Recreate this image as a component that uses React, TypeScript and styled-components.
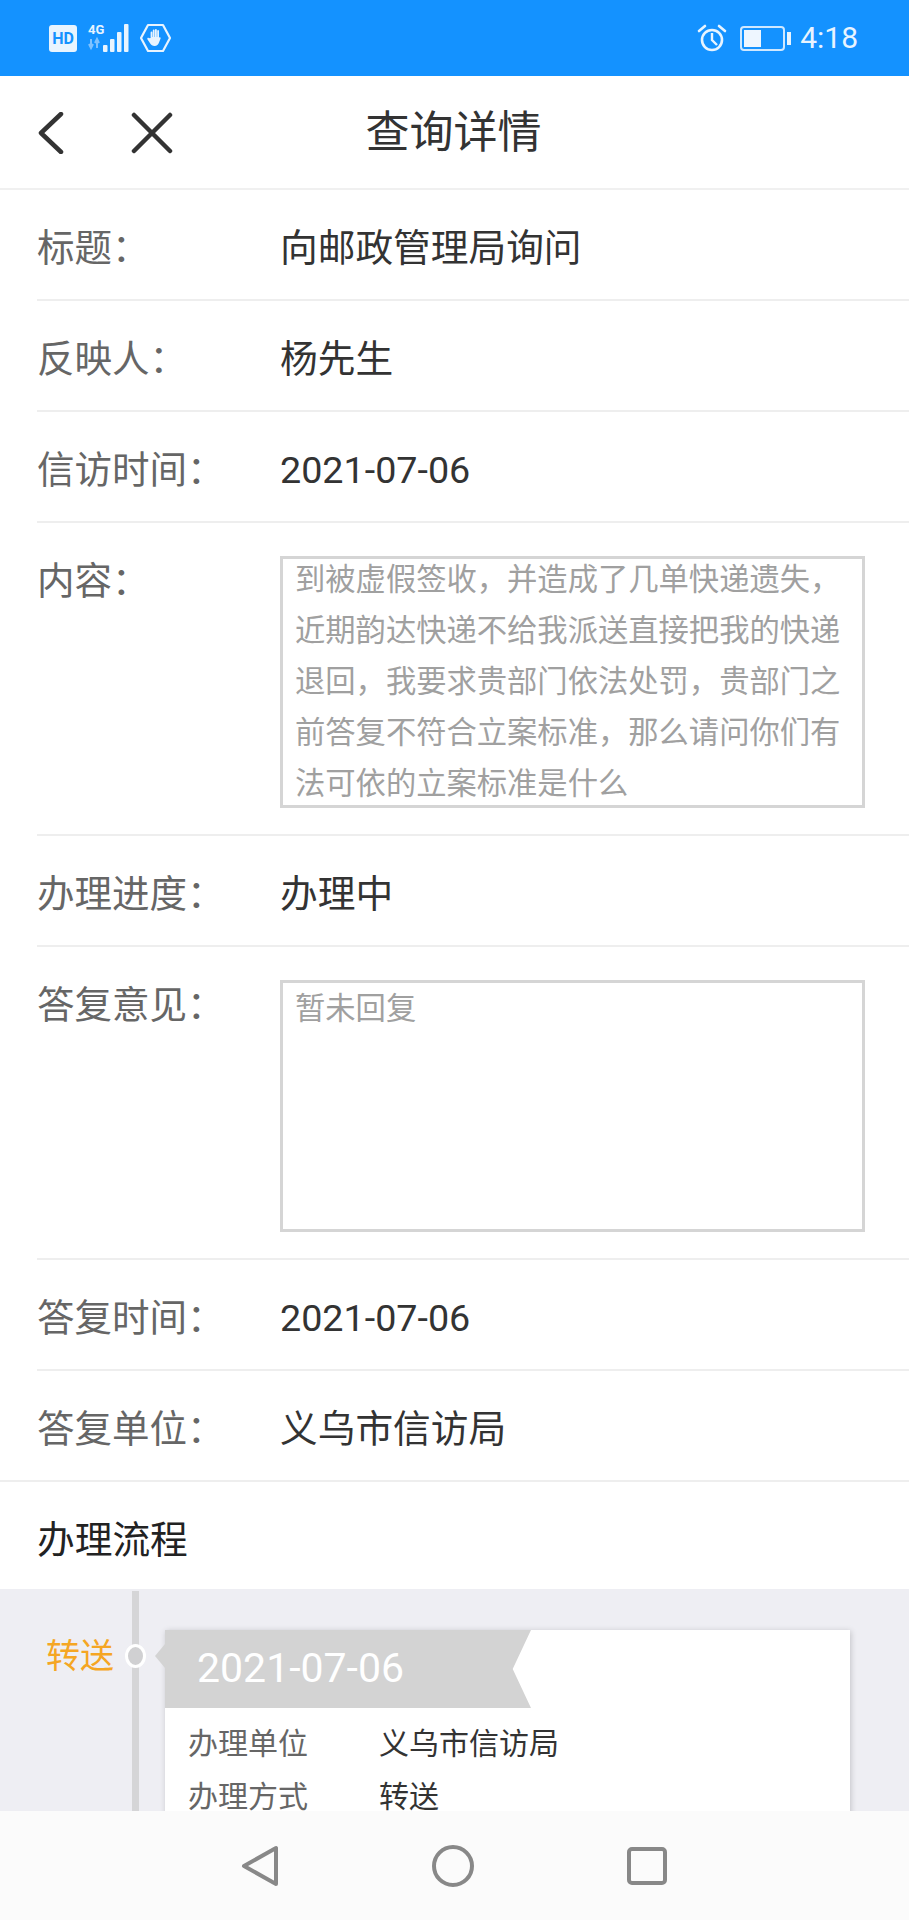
import React from "react";
import styled, { createGlobalStyle } from "styled-components";

const GlobalStyle = createGlobalStyle`
  html, body {
    margin: 0;
    padding: 0;
    background: #fff;
  }
  body {
    font-family: "Roboto", "Noto Sans CJK SC", sans-serif;
  }
`;

const App = () => {
  return (
    <Page>
      <GlobalStyle />
      <StatusBar>
        <StatusGroup>
          <HdBadge>HD</HdBadge>
          <Network>
            <NetworkType>4G</NetworkType>
            <svg width="44" height="30" viewBox="0 0 44 30">
              <path d="M4 16v9M2 21l2 4 2-4M10 25v-9M8 20l2-4 2 4" stroke="#7fc2ff" strokeWidth="2" fill="none" />
              <rect x="16" y="22" width="4.5" height="7" rx="1" fill="#e8f4ff" />
              <rect x="23" y="16" width="4.5" height="13" rx="1" fill="#e8f4ff" />
              <rect x="30" y="9" width="4.5" height="20" rx="1" fill="#e8f4ff" />
              <rect x="37" y="1" width="4.5" height="28" rx="1" fill="#e8f4ff" />
            </svg>
          </Network>
          <svg width="31" height="30" viewBox="0 0 31 30">
            <path d="M8 2h15l7 13-7 13H8L1 15z" fill="none" stroke="#e8f4ff" strokeWidth="2.2" strokeLinejoin="round" />
            <path
              d="M10.6 15V9.5a.9.9 0 0 1 1.8 0V14h.4V7.5a.9.9 0 0 1 1.8 0V14h.4V6.8a.9.9 0 0 1 1.8 0V14h.4V8a.9.9 0 0 1 1.8 0V15v-.2c.6-1 2-.2 1.6.8l-1.6 4c-.8 2-2 3.4-4.4 3.4-2.2 0-3.4-.8-4.4-2.4l-2.8-4.4c-.6-1 .8-1.8 1.6-1z"
              fill="#e8f4ff"
            />
          </svg>
        </StatusGroup>
        <StatusGroup>
          <svg width="30" height="30" viewBox="0 0 30 30">
            <circle cx="15" cy="17" r="10" fill="none" stroke="#e8f4ff" strokeWidth="2.6" />
            <path d="M15 10v7l5 5" fill="none" stroke="#e8f4ff" strokeWidth="2.4" />
            <path d="M2 8l6-5M28 8l-6-5" fill="none" stroke="#e8f4ff" strokeWidth="2.6" strokeLinecap="round" />
          </svg>
          <Battery>
            <BatteryLevel />
          </Battery>
          <Clock>4:18</Clock>
        </StatusGroup>
      </StatusBar>

      <NavBar>
        <NavIcons>
          <svg width="28" height="42" viewBox="0 0 28 42">
            <path d="M24 2L4 21l20 19" fill="none" stroke="#333" strokeWidth="4.5" strokeLinecap="round" strokeLinejoin="round" />
          </svg>
          <svg width="42" height="42" viewBox="0 0 42 42">
            <path d="M3 3l36 36M39 3L3 39" fill="none" stroke="#333" strokeWidth="4.5" strokeLinecap="round" />
          </svg>
        </NavIcons>
        <NavTitle>查询详情</NavTitle>
      </NavBar>

      <Row>
        <Label>标题：</Label>
        <Value>向邮政管理局询问</Value>
      </Row>
      <Row>
        <Label>反映人：</Label>
        <Value>杨先生</Value>
      </Row>
      <Row>
        <Label>信访时间：</Label>
        <Value>2021-07-06</Value>
      </Row>
      <Row $top>
        <Label>内容：</Label>
        <TextBox>
          <TextBoxBody $scrolled>
            到被虚假签收，并造成了几单快递遗失，近期韵达快递不给我派送直接把我的快递退回，我要求贵部门依法处罚，贵部门之前答复不符合立案标准，那么请问你们有法可依的立案标准是什么
          </TextBoxBody>
        </TextBox>
      </Row>
      <Row>
        <Label>办理进度：</Label>
        <Value>办理中</Value>
      </Row>
      <Row $top>
        <Label>答复意见：</Label>
        <TextBox>
          <TextBoxBody>暂未回复</TextBoxBody>
        </TextBox>
      </Row>
      <Row>
        <Label>答复时间：</Label>
        <Value>2021-07-06</Value>
      </Row>
      <Row $last>
        <Label>答复单位：</Label>
        <Value>义乌市信访局</Value>
      </Row>

      <SectionTitle>办理流程</SectionTitle>

      <Timeline>
        <StepLabel>转送</StepLabel>
        <StepDot />
        <Card>
          <Ribbon>2021-07-06</Ribbon>
          <CardRows>
            <CardRow>
              <CardKey>办理单位</CardKey>
              <CardValue>义乌市信访局</CardValue>
            </CardRow>
            <CardRow>
              <CardKey>办理方式</CardKey>
              <CardValue>转送</CardValue>
            </CardRow>
          </CardRows>
        </Card>
      </Timeline>

      <SystemBar>
        <svg width="38" height="42" viewBox="0 0 38 42">
          <path d="M35 3v36L3 21z" fill="none" stroke="#888" strokeWidth="4" strokeLinejoin="round" />
        </svg>
        <svg width="42" height="42" viewBox="0 0 42 42">
          <circle cx="21" cy="21" r="19" fill="none" stroke="#888" strokeWidth="4" />
        </svg>
        <svg width="40" height="38" viewBox="0 0 40 38">
          <rect x="2" y="2" width="36" height="34" rx="3" fill="none" stroke="#888" strokeWidth="4" />
        </svg>
      </SystemBar>
    </Page>
  );
};

const Page = styled.div`
  position: relative;
  width: 909px;
  height: 1920px;
  overflow: hidden;
  background: #fff;
  color: #333;
`;

const StatusBar = styled.div`
  height: 76px;
  box-sizing: border-box;
  padding: 23px 51px 0 49px;
  background: #1492ff;
  display: flex;
  justify-content: space-between;
  align-items: flex-start;
`;

const StatusGroup = styled.div`
  display: flex;
  align-items: center;
  height: 30px;
  gap: 11px;
`;

const HdBadge = styled.span`
  width: 28px;
  height: 27px;
  border-radius: 3px;
  background: #e8f4ff;
  color: #1492ff;
  font: 700 16px/27px "Roboto", sans-serif;
  text-align: center;
`;

const Network = styled.div`
  position: relative;
  display: flex;
  margin-left: -1px;
  margin-right: -2px;
`;

const NetworkType = styled.span`
  position: absolute;
  left: 1px;
  top: 0;
  color: #e8f4ff;
  font: 700 13px/14px "Roboto", sans-serif;
`;

const Battery = styled.div`
  position: relative;
  width: 45px;
  height: 25px;
  box-sizing: border-box;
  border: 2px solid #cfe8ff;
  border-radius: 4px;
  padding: 2px;
  margin-left: 2px;
  margin-right: 4px;

  &::after {
    content: "";
    position: absolute;
    right: -8px;
    top: 4px;
    width: 4px;
    height: 13px;
    background: #e8f4ff;
  }
`;

const BatteryLevel = styled.div`
  width: 17px;
  height: 100%;
  background: #eef6ff;
`;

const Clock = styled.span`
  color: #e8f4ff;
  font: 400 30px/30px "Roboto", sans-serif;
`;

const NavBar = styled.div`
  position: relative;
  height: 114px;
  box-sizing: border-box;
  padding-bottom: 6px;
  border-bottom: 2px solid #f0f0f0;
  display: flex;
  align-items: center;
  justify-content: center;
`;

const NavIcons = styled.div`
  position: absolute;
  left: 37px;
  top: 36px;
  display: flex;
  gap: 66px;
`;

const NavTitle = styled.h1`
  margin: 0 2px 0 0;
  font-size: 44px;
  font-weight: 400;
  color: #333;
`;

const Row = styled.div<{ $top?: boolean; $last?: boolean }>`
  display: flex;
  align-items: ${(props) => (props.$top ? "flex-start" : "center")};
  box-sizing: border-box;
  min-height: 111px;
  margin-left: ${(props) => (props.$last ? "0" : "37px")};
  padding-left: ${(props) => (props.$last ? "37px" : "0")};
  padding-top: ${(props) => (props.$top ? "33px" : "6px")};
  padding-bottom: ${(props) => (props.$top ? "26px" : "0")};
  border-bottom: 2px solid #eeeeee;
`;

const Label = styled.div`
  width: 243px;
  flex-shrink: 0;
  font-size: 37.5px;
  line-height: 50px;
  color: #666;
`;

const Value = styled.div`
  font-size: 37.7px;
  line-height: 50px;
  color: #333;
`;

const TextBox = styled.div`
  width: 585px;
  height: 252px;
  box-sizing: border-box;
  border: 3px solid #d5d5d5;
  padding: 0 12px;
  overflow: hidden;
  font-size: 30.3px;
  line-height: 51px;
  color: #a0a0a0;
`;

const TextBoxBody = styled.div<{ $scrolled?: boolean }>`
  margin-top: ${(props) => (props.$scrolled ? "-5px" : "0")};
`;

const SectionTitle = styled.div`
  height: 107px;
  box-sizing: border-box;
  padding-left: 37px;
  font-size: 37.7px;
  line-height: 117px;
  color: #222;
`;

const Timeline = styled.div`
  position: relative;
  height: 332px;
  box-sizing: border-box;
  padding: 41px 59px 0 165px;
  background: #eeeef3;

  &::before {
    content: "";
    position: absolute;
    left: 132px;
    top: 2px;
    bottom: 0;
    width: 7px;
    background: #d5d5d7;
  }
`;

const StepLabel = styled.span`
  position: absolute;
  left: 46px;
  top: 45px;
  font-size: 34px;
  line-height: 44px;
  color: #f5a623;
`;

const StepDot = styled.span`
  position: absolute;
  left: 125px;
  top: 55px;
  width: 15px;
  height: 18px;
  border: 3px solid #fff;
  border-radius: 50%;
  background: #d0d0d2;
`;

const Card = styled.div`
  position: relative;
  height: 290px;
  background: #fff;
  box-shadow: 1px 1px 6px rgba(0, 0, 0, 0.18);

  &::before {
    content: "";
    position: absolute;
    left: -10px;
    top: 14px;
    border-style: solid;
    border-width: 12px 10px 12px 0;
    border-color: transparent #d3d3d3 transparent transparent;
  }
`;

const Ribbon = styled.div`
  width: 366px;
  height: 78px;
  box-sizing: border-box;
  padding-left: 32px;
  background: #d3d3d3;
  clip-path: polygon(0 0, 100% 0, 95% 50%, 100% 100%, 0 100%);
  color: #fff;
  font-size: 41px;
  line-height: 76px;
`;

const CardRows = styled.div`
  padding: 6px 0 0 23px;
`;

const CardRow = styled.div`
  display: flex;
  height: 53px;
  align-items: center;
`;

const CardKey = styled.span`
  width: 191px;
  font-size: 30px;
  color: #666;
`;

const CardValue = styled.span`
  font-size: 30px;
  color: #333;
`;

const SystemBar = styled.div`
  position: absolute;
  left: 0;
  right: 0;
  bottom: 0;
  height: 109px;
  box-sizing: border-box;
  padding: 0 242px 0 241px;
  background: #fbfbfb;
  display: flex;
  justify-content: space-between;
  align-items: center;
`;

export default App;
